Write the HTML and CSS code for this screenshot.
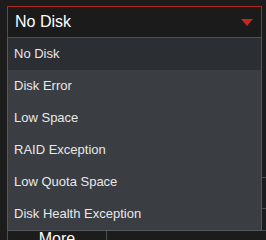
FILE: index.html
```html
<!DOCTYPE html>
<html lang="en">
<head>
    <meta charset="UTF-8">
    <meta name="viewport" content="width=device-width, initial-scale=1.0">
    <title>Disk filter</title>
    <link rel="stylesheet" href="styles.css">
</head>
<body>
    <div class="panel">
        <!-- Selector -->
        <div class="select">
            <span>No Disk</span>
            <span class="arrow"></span>
        </div>

        <!-- Tabla de fondo -->
        <div class="table">
            <div class="row row-a"></div>
            <div class="row row-b"></div>
            <div class="row row-c"></div>
            <div class="row row-more">
                <div class="cell cell-first">More</div>
                <div class="cell"></div>
            </div>
        </div>

        <!-- Lista desplegable -->
        <ul class="dropdown">
            <li class="item active">No Disk</li>
            <li class="item">Disk Error</li>
            <li class="item">Low Space</li>
            <li class="item">RAID Exception</li>
            <li class="item">Low Quota Space</li>
            <li class="item">Disk Health Exception</li>
        </ul>
    </div>
</body>
</html>
```
FILE: styles.css
```css
body {
    margin: 0;
    width: 266px;
    height: 240px;
    overflow: hidden;
    background-color: #1c1c1c;
    font-family: "Liberation Sans", Arial, sans-serif;
}

.panel {
    position: relative;
    height: 240px;
    overflow: hidden;
    box-sizing: border-box;
    padding: 6px 0 0 7px;
}

/* Selector */
.select {
    box-sizing: border-box;
    width: 255px;
    height: 32px;
    border: 1px solid #b3261e;
    background-color: #1b1b1b;
    color: #ffffff;
    font-size: 16px;
    display: flex;
    align-items: center;
    justify-content: space-between;
    padding: 0 8px 0 7px;
}

.arrow {
    width: 0;
    height: 0;
    border-left: 6px solid transparent;
    border-right: 6px solid transparent;
    border-top: 7px solid #c0291f;
    margin-top: 1px;
}

/* Tabla de fondo */
.table {
    width: 259px;
    border-left: 1px solid #4a4d52;
}

.row {
    border-bottom: 1px solid #4a4d52;
}

.row-a {
    height: 139px;
}

.row-b {
    height: 30px;
}

.row-c {
    height: 21px;
}

.row-more {
    display: flex;
    height: 31px;
}

.cell {
    flex-grow: 1;
    color: #ffffff;
    font-size: 16px;
    line-height: 16px;
}

.cell-first {
    flex-grow: 0;
    width: 98px;
    text-align: center;
    border-right: 1px solid #4a4d52;
}

/* Lista desplegable */
.dropdown {
    position: absolute;
    top: 38px;
    left: 7px;
    box-sizing: border-box;
    width: 255px;
    margin: 0;
    padding: 0;
    list-style: none;
    background-color: #3a3d42;
    border: 1px solid #55585e;
    border-top: none;
}

.item {
    height: 32px;
    line-height: 32px;
    padding-left: 6px;
    font-size: 13px;
    color: #e8e8e8;
}

.item.active {
    background-color: #2b2e33;
}
```
